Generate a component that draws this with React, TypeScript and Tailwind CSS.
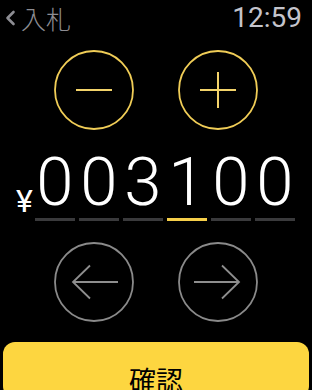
import React from "react";

const Circle = ({ color, children }: { color: string; children: React.ReactNode }) => (
  <svg width="80" height="80" viewBox="0 0 80 80">
    <circle cx="40" cy="40" r="39" fill="none" stroke={color} strokeWidth="1.8" />
    {children}
  </svg>
);

export default function App() {
  const digits = ["0", "0", "3", "1", "0", "0"];
  const active = 3;
  return (
    <div
      className="w-[312px] h-[390px] bg-black overflow-hidden flex flex-col"
      style={{ fontFamily: '"Roboto", "Noto Sans CJK JP", sans-serif' }}
    >
      <div className="h-[40px] flex items-start justify-between pl-[4px] pr-[10px] pt-[0px]">
        <div className="flex items-center text-[#8d8d93] text-[25px] leading-[36px]">
          <svg width="11" height="16" viewBox="0 0 11 16" className="mr-[5px] ml-[1px]">
            <path d="M8.5 2 L2.5 8 L8.5 14" fill="none" stroke="#8d8d93" strokeWidth="2.6" strokeLinecap="round" strokeLinejoin="round" />
          </svg>
          <span style={{ fontFamily: '"Noto Sans CJK JP", sans-serif' }} className="font-light">入札</span>
        </div>
        <div className="text-[#c4c4cc] text-[28px] leading-[36px] font-normal">12:59</div>
      </div>

      <div className="flex justify-center gap-[44px] mt-[14px]">
        <Circle color="#f0cd57">
          <line x1="22" y1="40" x2="58" y2="40" stroke="#f3d36a" strokeWidth="2" />
        </Circle>
        <Circle color="#f0cd57">
          <line x1="22" y1="40" x2="58" y2="40" stroke="#f3d36a" strokeWidth="2" />
          <line x1="40" y1="22" x2="40" y2="58" stroke="#f3d36a" strokeWidth="2" />
        </Circle>
      </div>

      <div className="flex items-end ml-[16px] mt-[20px]">
        <div className="text-white text-[32px] leading-none mb-[4px] mr-[2px]">¥</div>
        <div className="flex gap-[4px]">
          {digits.map((d, i) => (
            <div key={i} className="w-[40px] flex flex-col items-center">
              <div className="text-white text-[67px] leading-[64px] font-light">{d}</div>
              <div className={`w-[40px] h-[3px] mt-[4px] ${i === active ? "bg-[#f6cf4a]" : "bg-[#3a3a3c]"}`} />
            </div>
          ))}
        </div>
      </div>

      <div className="flex justify-center gap-[44px] mt-[21px]">
        <Circle color="#8a8a8a">
          <line x1="19" y1="40" x2="64" y2="40" stroke="#8e8e8e" strokeWidth="1.8" />
          <path d="M36 23.5 L19 40 L36 56.5" fill="none" stroke="#8e8e8e" strokeWidth="1.8" />
        </Circle>
        <Circle color="#8a8a8a">
          <line x1="16" y1="40" x2="61" y2="40" stroke="#8e8e8e" strokeWidth="1.8" />
          <path d="M44 23.5 L61 40 L44 56.5" fill="none" stroke="#8e8e8e" strokeWidth="1.8" />
        </Circle>
      </div>

      <div className="mx-[3px] mt-[20px] h-[80px] rounded-[12px] bg-[#fdd640] flex justify-center pt-[20px]">
        <span className="text-black text-[27px] leading-[36px]" style={{ fontFamily: '"Noto Sans CJK JP", sans-serif' }}>確認</span>
      </div>
    </div>
  );
}
